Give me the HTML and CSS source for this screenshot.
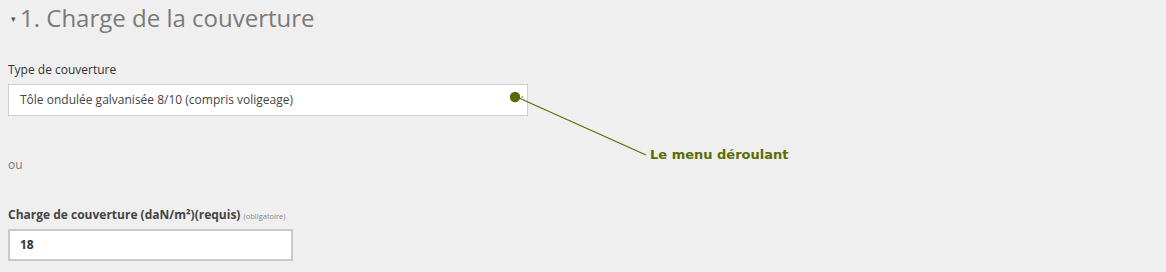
FILE: index.html
```html
<!DOCTYPE html>
<html lang="fr">
<head>
<meta charset="utf-8">
<title>Charge de la couverture</title>
<link rel="stylesheet" href="styles.css">
</head>
<body>
<div class="page">
  <h2 class="section-title"><span class="caret">&#9662;</span>1. Charge de la couverture</h2>
  <div class="field field-select">
    <label class="field-label">Type de couverture</label>
    <div class="select">Tôle ondulée galvanisée 8/10 (compris voligeage)</div>
  </div>
  <p class="or">ou</p>
  <div class="field field-input">
    <label class="field-label strong">Charge de couverture (daN/m²)(requis) <span class="hint">(obligatoire)</span></label>
    <div class="input">18</div>
  </div>
  <svg class="annotation" width="1166" height="272" viewBox="0 0 1166 272">
    <line x1="519" y1="98" x2="646" y2="155" stroke="#5a6e00" stroke-width="1.2"/>
    <polyline points="523,96 521,99 525,100" fill="none" stroke="#8a8a8a" stroke-width="1"/>
    <circle cx="515" cy="97" r="5.2" fill="#566b00"/>
  </svg>
  <div class="callout">Le menu déroulant</div>
</div>
</body>
</html>
```
FILE: styles.css
```css
html, body {
  margin: 0;
  padding: 0;
  background: #efefef;
}
body {
  font-family: "Open Sans", "Liberation Sans", sans-serif;
  color: #444;
  width: 1166px;
  height: 272px;
  overflow: hidden;
}
.page {
  position: relative;
  padding: 0 8px;
  height: 272px;
}
.section-title {
  margin: 0;
  padding-top: 2px;
  font-size: 24px;
  line-height: 32px;
  font-weight: 400;
  color: #7a7a7a;
  display: flex;
  align-items: center;
}
.caret {
  font-size: 9px;
  color: #555;
  margin: 0 4px 0 3px;
  line-height: 1;
}
.field-select {
  margin-top: 28px;
}
.field-label {
  display: block;
  font-size: 12px;
  line-height: 16px;
  color: #333;
  margin-bottom: 6px;
}
.select {
  box-sizing: border-box;
  width: 520px;
  height: 32px;
  border: 1px solid #cfcfcf;
  background: #fff;
  font-size: 12px;
  line-height: 30px;
  padding-left: 11px;
  color: #444;
}
.or {
  margin: 41px 0 0;
  font-size: 12px;
  line-height: 16px;
  color: #7a7a7a;
}
.field-input {
  margin-top: 34px;
}
.field-label.strong {
  font-weight: 700;
  color: #444;
  margin-bottom: 5px;
}
.hint {
  font-weight: 400;
  font-size: 7.5px;
  color: #888;
}
.input {
  box-sizing: border-box;
  width: 285px;
  height: 32px;
  border: 2px solid #c9c9c9;
  background: #fff;
  font-size: 12px;
  font-weight: 700;
  line-height: 28px;
  padding-left: 10px;
  color: #333;
}
.annotation {
  position: absolute;
  left: 0;
  top: 0;
  pointer-events: none;
}
.callout {
  position: absolute;
  left: 650px;
  top: 146px;
  font-family: "DejaVu Sans", Verdana, sans-serif;
  font-weight: 700;
  font-size: 13px;
  line-height: 17px;
  color: #5a6e00;
}
```
